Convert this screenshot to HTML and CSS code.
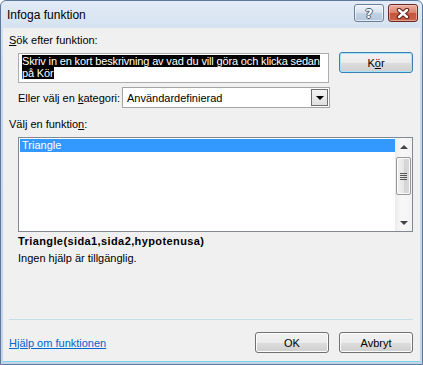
FILE: index.html
```html
<!DOCTYPE html>
<html lang="sv">

<head>
    <meta charset="UTF-8">
    <meta name="viewport" content="width=device-width, initial-scale=1.0">
    <title>Infoga funktion</title>

    <link rel="stylesheet" href="styles.css">

</head>

<body>
    <div class="window">

        <div class="titlebar">
            <span class="title">Infoga funktion</span>
            <div class="caption-buttons">
                <span class="cap-btn help-btn">?</span>
                <span class="cap-btn close-btn">
                    <svg width="14" height="11" viewBox="0 0 14 11">
                        <path d="M3 2 L11 9 M11 2 L3 9" stroke="#5a1e16" stroke-width="4.4" stroke-linecap="round"/>
                        <path d="M3 2 L11 9 M11 2 L3 9" stroke="#ffffff" stroke-width="2.4" stroke-linecap="round"/>
                    </svg>
                </span>
            </div>
        </div>

        <div class="client">

            <div class="label"><u>S</u>ök efter funktion:</div>

            <div class="search-row">
                <div class="search-box">
                    <span class="selected-text">Skriv in en kort beskrivning av vad du vill göra och klicka sedan</span><br>
                    <span class="selected-text">på Kör</span>
                </div>
                <button class="btn default-btn">K<u>ö</u>r</button>
            </div>

            <div class="category-row">
                <span class="category-label">Eller välj en <u>k</u>ategori:</span>
                <div class="combo">
                    <span class="combo-text">Användardefinierad</span>
                    <span class="combo-arrow"><span class="arrow-down"></span></span>
                </div>
            </div>

            <div class="label list-label">Välj en funktio<u>n</u>:</div>

            <div class="listbox">
                <div class="items">
                    <div class="item selected">Triangle</div>
                </div>
                <div class="scrollbar">
                    <div class="scroll-arrow"><span class="tri-up"></span></div>
                    <div class="thumb">
                        <span class="grip"></span>
                        <span class="grip"></span>
                        <span class="grip"></span>
                        <span class="grip"></span>
                    </div>
                    <div class="scroll-track"></div>
                    <div class="scroll-arrow"><span class="tri-down"></span></div>
                </div>
            </div>

            <div class="signature">Triangle(sida1,sida2,hypotenusa)</div>
            <div class="description">Ingen hjälp är tillgänglig.</div>

            <div class="separator"></div>

            <div class="footer">
                <a class="help-link" href="#">Hjälp om funktionen</a>
                <div class="buttons">
                    <button class="btn">OK</button>
                    <button class="btn">Avbryt</button>
                </div>
            </div>

        </div>
    </div>
</body>

</html>
```

FILE: styles.css
```css
* {
    box-sizing: border-box;
}

html, body {
    margin: 0;
    padding: 0;
}

body {
    width: 423px;
    height: 365px;
    overflow: hidden;
    font-family: "Liberation Sans", Arial, sans-serif;
    font-size: 11px;
    color: #000;
    background-color: #ffffff;
}

.window {
    width: 423px;
    height: 365px;
    display: flex;
    flex-direction: column;
    border: 1px solid #5b7a9e;
    border-radius: 6px 6px 0 0;
    padding: 0 2px 2px 2px;
    background: linear-gradient(to bottom, #e2ebf6, #c8d8eb 60px, #c4d5ea);
}

/* title bar */
.titlebar {
    height: 27px;
    display: flex;
    justify-content: space-between;
    align-items: flex-start;
    padding-left: 4px;
}

.title {
    font-size: 12px;
    line-height: 12px;
    margin-top: 8px;
    color: #000;
}

.caption-buttons {
    display: flex;
    gap: 4px;
    margin-top: 3px;
    margin-right: 2px;
}

.cap-btn {
    width: 30px;
    height: 18px;
    border-radius: 3px;
    display: flex;
    align-items: center;
    justify-content: center;
}

.help-btn {
    border: 1px solid #6d7f98;
    background: linear-gradient(to bottom, #eef3f9, #d6e1ee 50%, #c3d2e5 51%, #b6c8de);
    box-shadow: inset 0 0 0 1px rgba(255, 255, 255, 0.6);
    font-family: "DejaVu Sans", sans-serif;
    font-weight: bold;
    font-size: 13px;
    color: #ffffff;
    text-shadow: 1px 0 0 #4a5a70, -1px 0 0 #4a5a70, 0 1px 0 #4a5a70, 0 -1px 0 #4a5a70;
}

.close-btn {
    border: 1px solid #6b2a20;
    background: linear-gradient(to bottom, #eab0a2, #d9806b 50%, #c9533a 51%, #c8634a);
    box-shadow: inset 0 0 0 1px rgba(255, 220, 210, 0.5);
}

/* client area */
.client {
    flex: 1;
    display: flex;
    flex-direction: column;
    background-color: #f0f0f0;
    padding: 6px 7px 8px 6px;
    border-bottom: 1px solid #7fd3ea;
}

.label {
    line-height: 13px;
    height: 13px;
}

.search-row {
    display: flex;
    gap: 10px;
    margin-top: 5px;
    padding-left: 9px;
}

.search-box {
    width: 311px;
    height: 30px;
    margin-top: 1px;
    border: 1px solid #abadb3;
    background-color: #fff;
    padding: 1px 2px 0 3px;
    line-height: 12px;
    white-space: nowrap;
    overflow: hidden;
}

.selected-text {
    background-color: #000;
    color: #ffffff;
    letter-spacing: -0.15px;
}

.btn {
    width: 74px;
    height: 21px;
    padding: 0;
    font-family: inherit;
    font-size: 11px;
    color: #000;
    border: 1px solid #707070;
    border-radius: 3px;
    background: linear-gradient(to bottom, #f2f2f2, #ebebeb 50%, #dddddd 51%, #cfcfcf);
    box-shadow: inset 0 0 0 1px #fcfcfc;
}

.default-btn {
    border-color: #3c7fb1;
    box-shadow: inset 0 0 0 1px #a9e3f9;
}

.category-row {
    display: flex;
    align-items: center;
    height: 21px;
    margin-top: 4px;
    padding-left: 9px;
}

.category-label {
    width: 104px;
}

.combo {
    width: 208px;
    height: 21px;
    display: flex;
    align-items: center;
    justify-content: space-between;
    border: 1px solid #a4a4a4;
    background-color: #fff;
    padding: 1px;
}

.combo-text {
    padding-left: 3px;
}

.combo-arrow {
    width: 17px;
    height: 17px;
    display: flex;
    align-items: center;
    justify-content: center;
    border: 1px solid #6f6f6f;
    background: linear-gradient(to bottom, #f4f4f4, #e0e0e0);
}

.arrow-down {
    width: 0;
    height: 0;
    border-left: 4px solid transparent;
    border-right: 4px solid transparent;
    border-top: 4px solid #000;
}

.list-label {
    margin-top: 10px;
}

.listbox {
    display: flex;
    height: 95px;
    margin-top: 6px;
    margin-left: 9px;
    border: 1px solid #828790;
    background-color: #fff;
}

.items {
    flex: 1;
    padding: 1px 0 0 1px;
}

.item {
    height: 13px;
    line-height: 13px;
    padding-left: 2px;
}

.selected {
    background-color: #3399ff;
    color: #fff;
}

.scrollbar {
    width: 17px;
    display: flex;
    flex-direction: column;
    background: linear-gradient(to right, #ececec, #f8f8f8 40%, #f2f2f2);
}

.scroll-arrow {
    height: 17px;
    display: flex;
    align-items: center;
    justify-content: center;
}

.tri-up {
    width: 0;
    height: 0;
    border-left: 4px solid transparent;
    border-right: 4px solid transparent;
    border-bottom: 4px solid #444;
}

.tri-down {
    width: 0;
    height: 0;
    border-left: 4px solid transparent;
    border-right: 4px solid transparent;
    border-top: 4px solid #444;
}

.thumb {
    height: 38px;
    margin: 2px 1px 0 1px;
    border: 1px solid #989898;
    border-radius: 2px;
    background: linear-gradient(to right, #f2f2f2, #e6e6e6 50%, #d4d4d4 51%, #d8d8d8);
    box-shadow: inset 0 0 0 1px #fafafa;
    display: flex;
    flex-direction: column;
    align-items: center;
    justify-content: center;
    gap: 1px;
}

.grip {
    width: 7px;
    height: 1px;
    background-color: #555;
}

.scroll-track {
    flex: 1;
}

.signature {
    margin-top: 3px;
    padding-left: 9px;
    line-height: 13px;
    font-weight: bold;
    letter-spacing: 0.4px;
}

.description {
    margin-top: 4px;
    padding-left: 9px;
    line-height: 13px;
}

.separator {
    margin-top: auto;
    height: 1px;
    background-color: #c4dde6;
}

.footer {
    display: flex;
    justify-content: space-between;
    align-items: center;
    margin-top: 12px;
    height: 21px;
}

.help-link {
    color: #0066cc;
    text-decoration: underline;
}

.buttons {
    display: flex;
    gap: 10px;
}
```
